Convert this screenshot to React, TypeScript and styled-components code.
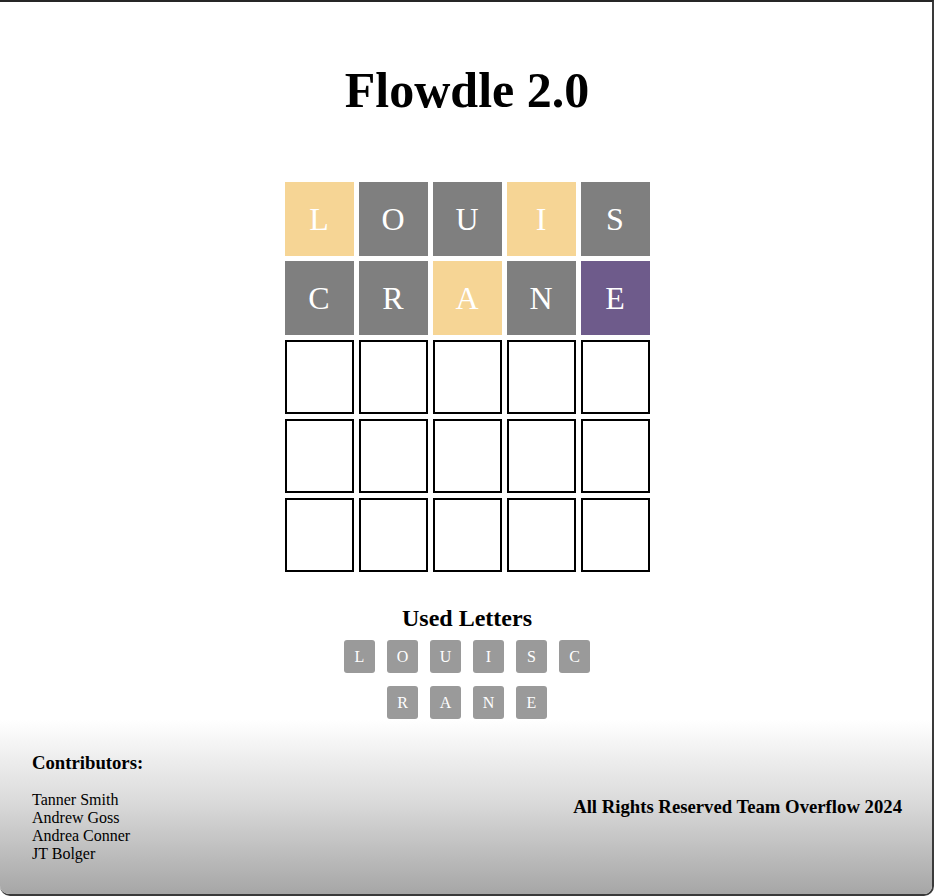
import React from "react";
import styled, { createGlobalStyle } from "styled-components";

const GlobalStyle = createGlobalStyle`
  html, body {
    margin: 0;
    padding: 0;
    background: #ffffff;
  }
  body {
    font-family: "Liberation Serif", "Times New Roman", serif;
    color: #000;
  }
  * { box-sizing: border-box; }
`;

type TileState = "present" | "absent" | "correct" | "empty";

const tileColors: Record<TileState, string> = {
  present: "#f6d595",
  absent: "#7f7f7f",
  correct: "#6e5b8b",
  empty: "#ffffff",
};

const Page = styled.div`
  height: 100vh;
  min-height: 896px;
  display: flex;
  flex-direction: column;
  border-top: 2px solid #262626;
  border-right: 2px solid #3a3a3a;
  border-bottom: 2px solid #3a3a3a;
  border-bottom-left-radius: 10px;
  border-bottom-right-radius: 10px;
  overflow: hidden;
`;

const Main = styled.main`
  flex: 1;
  display: flex;
  flex-direction: column;
  align-items: center;
  padding-top: 63px;
  padding-left: 2px;
`;

const Title = styled.h1`
  margin: 0;
  font-size: 50px;
  line-height: 50px;
  font-weight: 700;
`;

const Board = styled.div`
  margin-top: 67px;
  display: grid;
  grid-template-columns: repeat(5, 69px);
  grid-auto-rows: 74px;
  column-gap: 5px;
  row-gap: 5px;
`;

const Tile = styled.div<{ $state: TileState }>`
  display: flex;
  align-items: center;
  justify-content: center;
  background: ${(p) => tileColors[p.$state]};
  border: 2px solid ${(p) => (p.$state === "empty" ? "#000" : tileColors[p.$state])};
  color: #ffffff;
  font-size: 32px;
  line-height: 1;
`;

const UsedTitle = styled.h2`
  margin: 32px 0 0;
  font-size: 24px;
  line-height: 28px;
  font-weight: 700;
`;

const UsedList = styled.div`
  margin-top: 8px;
  width: 260px;
  display: flex;
  flex-wrap: wrap;
  justify-content: center;
  column-gap: 12px;
  row-gap: 13px;
`;

const UsedTile = styled.div`
  width: 31px;
  height: 33px;
  border-radius: 3px;
  background: #9a9a9a;
  color: #ffffff;
  font-size: 16px;
  display: flex;
  align-items: center;
  justify-content: center;
`;

const Footer = styled.footer`
  height: 174px;
  flex-shrink: 0;
  padding: 0 30px 0 32px;
  display: flex;
  align-items: center;
  justify-content: space-between;
  background: linear-gradient(to bottom, #ffffff 0%, #dcdcdc 45%, #a6a6a6 100%);
`;

const Contributors = styled.div`
  display: flex;
  flex-direction: column;
`;

const FooterHeading = styled.h3`
  margin: 0;
  font-size: 18.72px;
  line-height: 22px;
  font-weight: 700;
`;

const NameList = styled.div`
  margin-top: 17px;
  display: flex;
  flex-direction: column;
`;

const Name = styled.span`
  font-size: 16px;
  line-height: 18px;
`;

const rows: { letter: string; state: TileState }[][] = [
  [
    { letter: "L", state: "present" },
    { letter: "O", state: "absent" },
    { letter: "U", state: "absent" },
    { letter: "I", state: "present" },
    { letter: "S", state: "absent" },
  ],
  [
    { letter: "C", state: "absent" },
    { letter: "R", state: "absent" },
    { letter: "A", state: "present" },
    { letter: "N", state: "absent" },
    { letter: "E", state: "correct" },
  ],
];

const usedLetters = ["L", "O", "U", "I", "S", "C", "R", "A", "N", "E"];
const names = ["Tanner Smith", "Andrew Goss", "Andrea Conner", "JT Bolger"];

export default function App() {
  const cells: { letter: string; state: TileState }[] = [];
  for (let r = 0; r < 5; r++) {
    for (let c = 0; c < 5; c++) {
      cells.push(rows[r] ? rows[r][c] : { letter: "", state: "empty" });
    }
  }
  return (
    <>
      <GlobalStyle />
      <Page>
        <Main>
          <Title>Flowdle 2.0</Title>
          <Board>
            {cells.map((cell, i) => (
              <Tile key={i} $state={cell.state}>
                {cell.letter}
              </Tile>
            ))}
          </Board>
          <UsedTitle>Used Letters</UsedTitle>
          <UsedList>
            {usedLetters.map((l) => (
              <UsedTile key={l}>{l}</UsedTile>
            ))}
          </UsedList>
        </Main>
        <Footer>
          <Contributors>
            <FooterHeading>Contributors:</FooterHeading>
            <NameList>
              {names.map((n) => (
                <Name key={n}>{n}</Name>
              ))}
            </NameList>
          </Contributors>
          <FooterHeading>All Rights Reserved Team Overflow 2024</FooterHeading>
        </Footer>
      </Page>
    </>
  );
}
